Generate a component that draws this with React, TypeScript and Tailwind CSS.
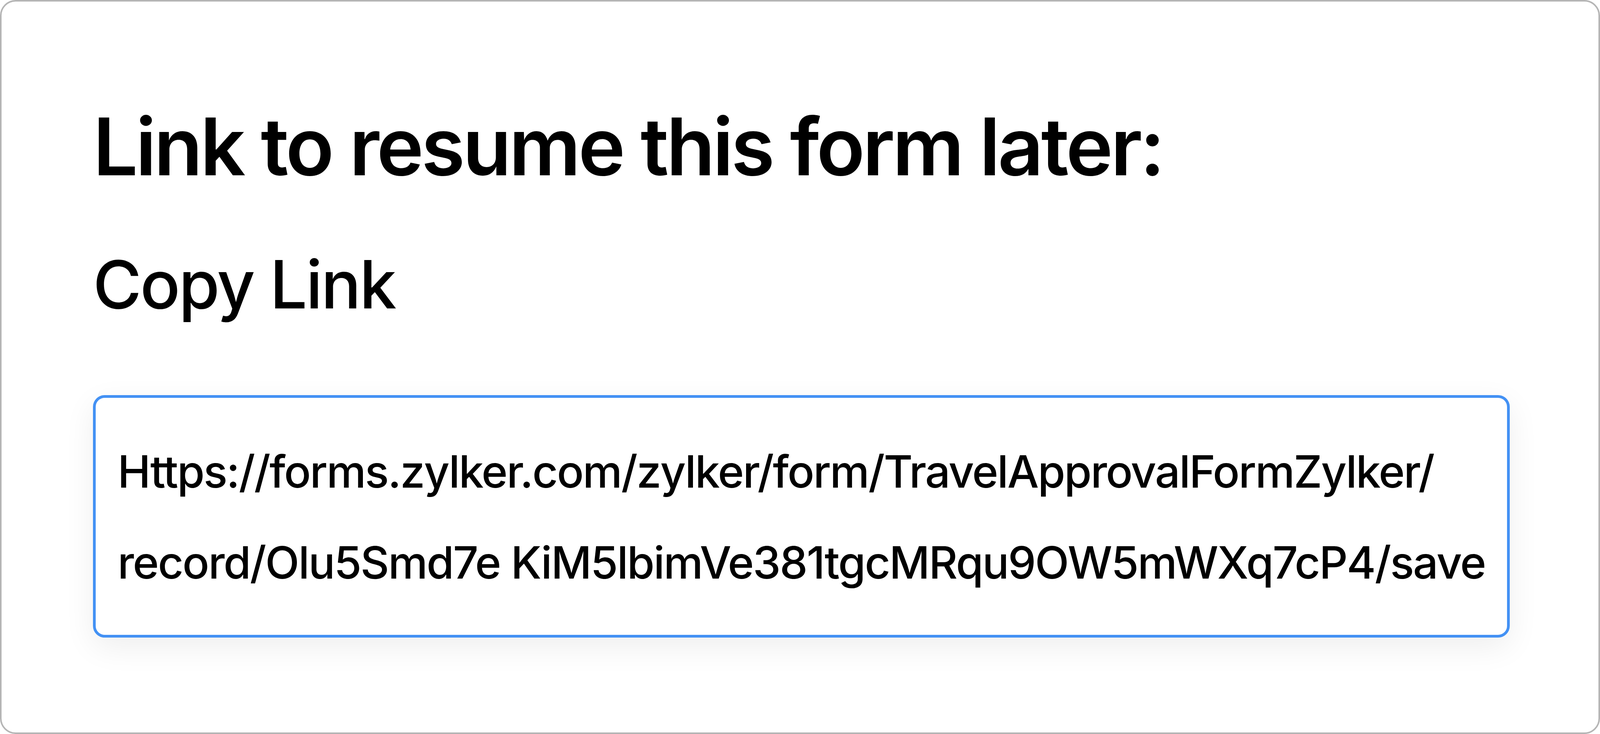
const RESUME_URL_LINES = [
  'Https://forms.zylker.com/zylker/form/TravelApprovalFormZylker/',
  'record/Olu5Smd7e KiM5lbimVe381tgcMRqu9OW5mWXq7cP4/save',
];

export default function App() {
  return (
    <div className="w-full h-screen overflow-hidden rounded-[40px] border-[4px] border-[#b5b5b5] bg-white pt-[269px] pl-[5.713%] font-['Inter',sans-serif] text-black">
      {/* Title */}
      <h1 className="text-[204px] leading-[204px] font-semibold tracking-[-0.031em] whitespace-nowrap">
        Link to resume this form later:
      </h1>

      {/* Subtitle */}
      <h2 className="mt-[166px] text-[170px] leading-[170px] font-medium tracking-[-0.023em] whitespace-nowrap">
        Copy Link
      </h2>

      {/* Link field */}
      <div className="mt-[199px] w-[94.1%] rounded-[30px] border-[7px] border-[#4391f4] bg-white pt-[72px] pb-[69px] pl-[56px] shadow-[0_24px_80px_rgba(0,0,0,0.07)]">
        {RESUME_URL_LINES.map((line) => (
          <div
            key={line}
            className="text-[114px] leading-[233px] font-medium tracking-[-0.025em] whitespace-nowrap"
          >
            {line}
          </div>
        ))}
      </div>
    </div>
  );
}
